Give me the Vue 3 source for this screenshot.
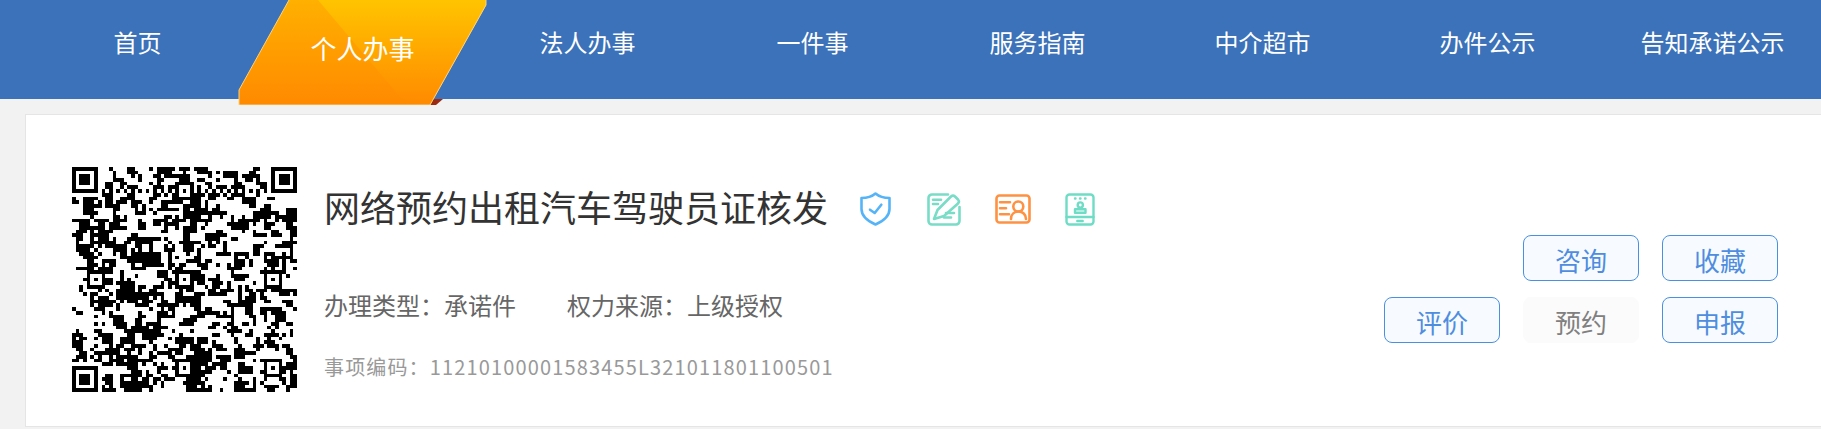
<script setup>
import { computed } from "vue";

const navItems = [
  { label: "首页" },
  { label: "个人办事", active: true },
  { label: "法人办事" },
  { label: "一件事" },
  { label: "服务指南" },
  { label: "中介超市" },
  { label: "办件公示" },
  { label: "告知承诺公示" }
];

const size = 61;

// fake but plausible qr matrix, seeded so it stays the same every run
const qrPath = computed(() => {
  const cells = [];
  let seed = 48271;
  const next = () => {
    seed = (seed * 16807) % 2147483647;
    return seed / 2147483647;
  };

  for (let y = 0; y < size; y++) {
    const row = [];
    for (let x = 0; x < size; x++) {
      const left = x > 0 ? row[x - 1] : 0;
      const up = y > 0 ? cells[y - 1][x] : 0;
      row.push(next() < 0.22 + 0.26 * (left + up) ? 1 : 0);
    }
    cells.push(row);
  }

  // timing lines
  for (let i = 0; i < size; i++) {
    cells[6][i] = i % 2 === 0 ? 1 : 0;
    cells[i][6] = i % 2 === 0 ? 1 : 0;
  }

  function finder(ox, oy) {
    for (let y = -1; y <= 7; y++) {
      for (let x = -1; x <= 7; x++) {
        const cx = ox + x;
        const cy = oy + y;
        if (cx < 0 || cy < 0 || cx >= size || cy >= size) continue;
        const ring = x === 0 || x === 6 || y === 0 || y === 6;
        const core = x >= 2 && x <= 4 && y >= 2 && y <= 4;
        const inside = x >= 0 && x <= 6 && y >= 0 && y <= 6;
        cells[cy][cx] = inside && (ring || core) ? 1 : 0;
      }
    }
  }

  function align(cx, cy) {
    for (let y = -2; y <= 2; y++) {
      for (let x = -2; x <= 2; x++) {
        const edge = Math.max(Math.abs(x), Math.abs(y));
        cells[cy + y][cx + x] = edge === 1 ? 0 : 1;
      }
    }
  }

  const centers = [6, 30, 54];
  centers.forEach((cy) => {
    centers.forEach((cx) => {
      if ((cx === 6 && cy === 6) || (cx === 54 && cy === 6) || (cx === 6 && cy === 54)) return;
      align(cx, cy);
    });
  });

  finder(0, 0);
  finder(size - 7, 0);
  finder(0, size - 7);

  let d = "";
  cells.forEach((row, y) => {
    row.forEach((on, x) => {
      if (on) d += `M${x} ${y}h1v1h-1z`;
    });
  });
  return d;
});
</script>

<template>
  <div class="page">
    <nav class="nav">
      <a
        v-for="item in navItems"
        :key="item.label"
        class="nav-item"
        :class="{ 'nav-item--active': item.active }"
      >
        <svg v-if="item.active" class="tab-bg" viewBox="0 0 258 105" aria-hidden="true">
          <defs>
            <linearGradient id="tabLeft" x1="0" y1="0" x2="0" y2="1">
              <stop offset="0" stop-color="#ffb000" />
              <stop offset="1" stop-color="#ff8a00" />
            </linearGradient>
            <linearGradient id="tabRight" x1="0" y1="0" x2="0" y2="1">
              <stop offset="0" stop-color="#ffc400" />
              <stop offset="1" stop-color="#ff8a00" />
            </linearGradient>
          </defs>
          <polygon points="194,99 205,99 198,105 192,105" fill="#9c2a10" />
          <path d="M51 0H248V5L192 105H1V90z" fill="url(#tabLeft)" />
          <path d="M80 0H248V5L192 105H178L162 97z" fill="url(#tabRight)" />
          <path d="M51 0L1 90V105H192L248 5V0" fill="none" stroke="#ffd27a" stroke-width="1" />
        </svg>
        <span class="nav-label">{{ item.label }}</span>
      </a>
    </nav>

    <section class="card">
      <svg class="qr" :viewBox="`0 0 ${size} ${size}`" shape-rendering="crispEdges" aria-label="二维码">
        <path :d="qrPath" fill="#000" />
      </svg>

      <div class="info">
        <div class="title-row">
          <h1>网络预约出租汽车驾驶员证核发</h1>
          <div class="badges">
            <svg class="badge-shield" viewBox="0 0 31 34" fill="none" stroke="#55b4f8" stroke-width="2.6" stroke-linecap="round" stroke-linejoin="round">
              <path d="M15.500 1.500C19 4.500 24 6 29.500 6v11c0 7-6 12-14 15.500C7.500 29 1.500 24 1.500 17V6C7 6 12 4.500 15.500 1.500z" />
              <path d="M10 17.700l4.700 3.300 6.600-8.300" />
            </svg>
            <svg class="badge-pen" viewBox="0 0 34 33" fill="none" stroke="#78dcc6" stroke-width="2.6" stroke-linecap="round" stroke-linejoin="round">
              <path d="M21 1.500H5A3.500 3.500 0 0 0 1.500 5v23A3.500 3.500 0 0 0 5 31.500h24a3.500 3.500 0 0 0 3.500-3.500V14" />
              <path d="M7 26l3.500-9L24 3.500a3 3 0 0 1 4 0L31 6.500a3 3 0 0 1 0 4L17 23z" />
              <path d="M6 6.700h8M6 11h5M19 20h8M17 24.500h7" />
            </svg>
            <svg class="badge-id" viewBox="0 0 36 30" fill="none" stroke="#ff9142" stroke-width="2.6" stroke-linecap="round" stroke-linejoin="round">
              <rect x="1.500" y="1.500" width="33" height="27" rx="3" />
              <path d="M5 8.300h10M5 14.300h6M5 20.300h9" />
              <circle cx="23.300" cy="12.500" r="5" />
              <path d="M16 25c0-4.500 3-7.500 7.300-7.500s7.700 3 7.700 7.500" />
            </svg>
            <svg class="badge-tablet" viewBox="0 0 30 33" fill="none" stroke="#6fdcc5" stroke-width="2.4" stroke-linecap="round" stroke-linejoin="round">
              <rect x="1.500" y="1.500" width="27" height="30" rx="3" />
              <path d="M1.500 24h27M12.300 28h5.400M10 5.500h.5M15 5.500h.5M20 5.500h.5" />
              <circle cx="15.300" cy="12" r="2.600" />
              <path d="M10 16.300h10.500v3.400H10z" />
            </svg>
          </div>
        </div>

        <div class="meta">
          <span>办理类型：承诺件</span>
          <span>权力来源：上级授权</span>
        </div>

        <p class="code">事项编码：11210100001583455L321011801100501</p>
      </div>

      <div class="actions">
        <div class="action-row">
          <button class="btn">咨询</button>
          <button class="btn">收藏</button>
        </div>
        <div class="action-row">
          <button class="btn">评价</button>
          <button class="btn btn--off">预约</button>
          <button class="btn">申报</button>
        </div>
      </div>
    </section>
  </div>
</template>

<style scoped>
.page {
  width: 1821px;
  height: 429px;
  overflow: hidden;
  background: #f2f2f2;
  font-family: "Noto Sans CJK SC", "Noto Sans", sans-serif;
}

.nav {
  display: flex;
  height: 99px;
  padding-left: 25px;
  background: #3b72b9;
}

.nav-item {
  position: relative;
  flex: 0 0 225px;
  display: flex;
  align-items: center;
  justify-content: center;
  padding-bottom: 15px;
  box-sizing: border-box;
  font-size: 24px;
  line-height: 34px;
  color: #fff;
  white-space: nowrap;
}

.nav-item--active {
  padding-bottom: 3px;
  font-size: 26px;
}

.nav-label {
  position: relative;
}

.tab-bg {
  position: absolute;
  left: -12px;
  top: 0;
  width: 258px;
  height: 105px;
}

.card {
  display: flex;
  align-items: flex-start;
  box-sizing: border-box;
  width: 1800px;
  height: 313px;
  margin: 15px 0 0 25px;
  padding: 52px 0 0 46px;
  border: 1px solid #e5e5e5;
  background: #fff;
}

.qr {
  flex: none;
  width: 225px;
  height: 225px;
}

.info {
  margin-left: 27px;
  padding-top: 14px;
}

.title-row {
  display: flex;
  align-items: center;
  height: 50px;
}

h1 {
  margin: 0;
  font-size: 36px;
  font-weight: 400;
  line-height: 50px;
  color: #333;
}

.badges {
  display: flex;
  align-items: center;
  gap: 34px;
  margin-left: 32px;
  margin-top: 6px;
}

.badge-shield {
  width: 31px;
  height: 34px;
  margin-right: 2px;
}

.badge-pen {
  width: 34px;
  height: 33px;
}

.badge-id {
  width: 36px;
  height: 30px;
}

.badge-tablet {
  width: 30px;
  height: 33px;
}

.meta {
  display: flex;
  gap: 51px;
  margin-top: 57px;
  font-size: 24px;
  line-height: 34px;
  color: #666;
}

.code {
  margin: 31px 0 0;
  font-size: 20px;
  line-height: 28px;
  letter-spacing: 1.15px;
  color: #999;
}

.actions {
  margin-left: auto;
  margin-right: 46px;
  margin-top: 68px;
  display: flex;
  flex-direction: column;
  gap: 16px;
}

.action-row {
  display: flex;
  justify-content: flex-end;
  gap: 23px;
}

.btn {
  width: 116px;
  height: 46px;
  padding: 3px 0 0;
  border: 1px solid #4a90e2;
  border-radius: 8px;
  background: #f7fbff;
  font: inherit;
  font-size: 26px;
  line-height: 40px;
  color: #4f8ddf;
}

.btn--off {
  border-color: #fbfbfb;
  background: #fbfbfb;
  color: #808080;
}
</style>
